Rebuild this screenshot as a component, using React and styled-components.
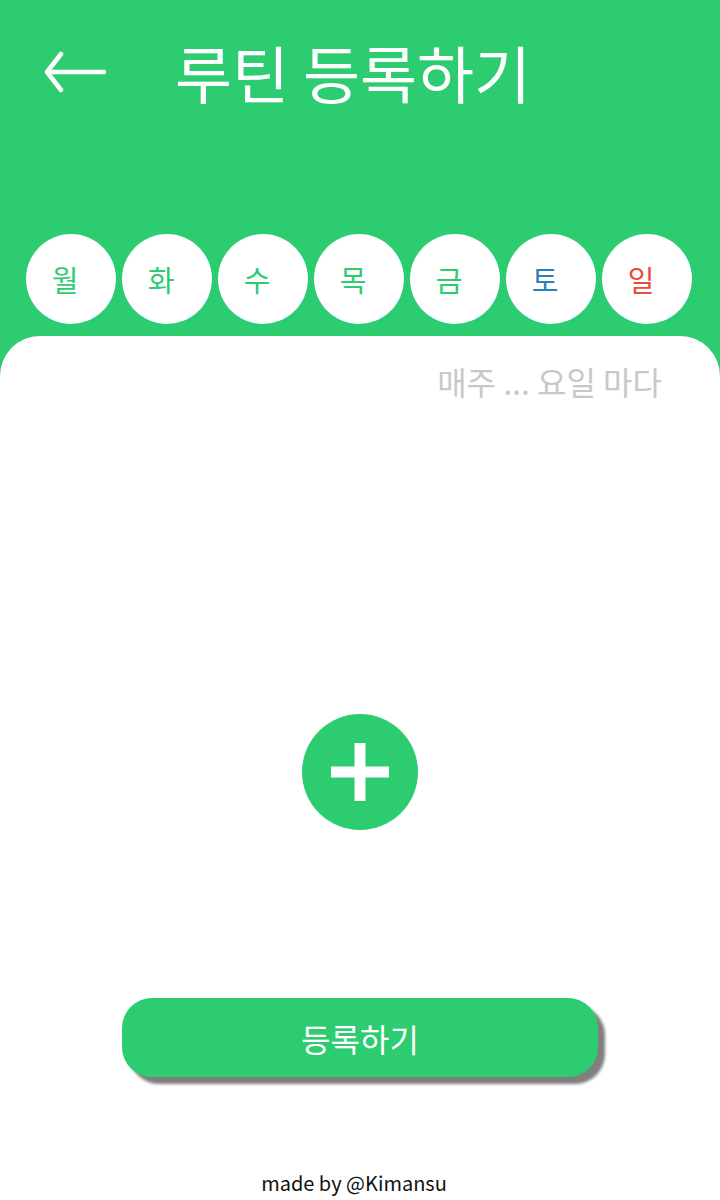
import React from "react";
import styled, { createGlobalStyle } from "styled-components";

const GREEN = "#2ecc71";

const GlobalStyle = createGlobalStyle`
  html, body {
    margin: 0;
    padding: 0;
    background: ${GREEN};
  }
  body {
    font-family: "Noto Sans CJK KR", "Noto Sans", sans-serif;
  }
`;

const Page = styled.div`
  width: 720px;
  min-height: 1200px;
  background: ${GREEN};
  display: flex;
  flex-direction: column;
`;

const Header = styled.header`
  height: 336px;
  display: flex;
  flex-direction: column;
`;

const TitleRow = styled.div`
  display: flex;
  align-items: center;
  height: 144px;
  padding-left: 44px;
`;

const BackButton = styled.button`
  background: none;
  border: none;
  padding: 0;
  margin: 0 69px 0 0;
  display: flex;
  cursor: pointer;
`;

const Title = styled.h1`
  margin: 0;
  color: #fff;
  font-size: 62px;
  font-weight: 400;
  line-height: 1;
`;

const DayRow = styled.div`
  display: flex;
  justify-content: center;
  gap: 6px;
  margin-top: 90px;
  padding-right: 2px;
`;

const DayCircle = styled.button`
  width: 90px;
  height: 90px;
  border-radius: 50%;
  border: none;
  background: #fff;
  color: ${(p) => p.color};
  font-family: inherit;
  font-size: 29px;
  line-height: 1;
  display: flex;
  align-items: center;
  justify-content: center;
  padding: 0 12px 0 0;
`;

const Panel = styled.main`
  flex: 1;
  background: #fff;
  border-radius: 40px 40px 0 0;
  display: flex;
  flex-direction: column;
  align-items: center;
`;

const Subtitle = styled.p`
  align-self: stretch;
  margin: 24px 58px 0 0;
  text-align: right;
  color: #c8c8c8;
  font-size: 32px;
  line-height: 42px;
`;

const AddButton = styled.button`
  width: 116px;
  height: 116px;
  border-radius: 50%;
  border: none;
  background: ${GREEN};
  margin-top: 312px;
  display: flex;
  align-items: center;
  justify-content: center;
  padding: 0;
`;

const SubmitButton = styled.button`
  width: 476px;
  height: 79px;
  margin-top: 168px;
  border: none;
  border-radius: 30px;
  background: ${GREEN};
  color: #fff;
  font-family: inherit;
  font-size: 32px;
  box-shadow: 7px 7px 3px rgba(0, 0, 0, 0.5);
`;

const Footer = styled.footer`
  margin-top: 92px;
  padding-right: 12px;
  font-size: 20px;
  line-height: 28px;
  color: #111;
`;

const days = [
  { label: "월", color: GREEN },
  { label: "화", color: GREEN },
  { label: "수", color: GREEN },
  { label: "목", color: GREEN },
  { label: "금", color: GREEN },
  { label: "토", color: "#2a80b9" },
  { label: "일", color: "#e74c3c" },
];

const ArrowIcon = () => (
  <svg width="62" height="42" viewBox="0 0 62 42">
    <path
      d="M60 21H3M17 3L3 21l14 18"
      fill="none"
      stroke="#fff"
      strokeWidth="4.5"
      strokeLinecap="round"
      strokeLinejoin="round"
    />
  </svg>
);

const PlusIcon = () => (
  <svg width="58" height="58" viewBox="0 0 58 58">
    <rect x="0" y="23.5" width="58" height="11" fill="#fff" />
    <rect x="23.5" y="0" width="11" height="58" fill="#fff" />
  </svg>
);

export default function App() {
  return (
    <Page>
      <GlobalStyle />
      <Header>
        <TitleRow>
          <BackButton aria-label="back">
            <ArrowIcon />
          </BackButton>
          <Title>루틴 등록하기</Title>
        </TitleRow>
        <DayRow>
          {days.map((d) => (
            <DayCircle key={d.label} color={d.color}>
              {d.label}
            </DayCircle>
          ))}
        </DayRow>
      </Header>
      <Panel>
        <Subtitle>매주 ... 요일 마다</Subtitle>
        <AddButton aria-label="add">
          <PlusIcon />
        </AddButton>
        <SubmitButton>등록하기</SubmitButton>
        <Footer>made by @Kimansu</Footer>
      </Panel>
    </Page>
  );
}
